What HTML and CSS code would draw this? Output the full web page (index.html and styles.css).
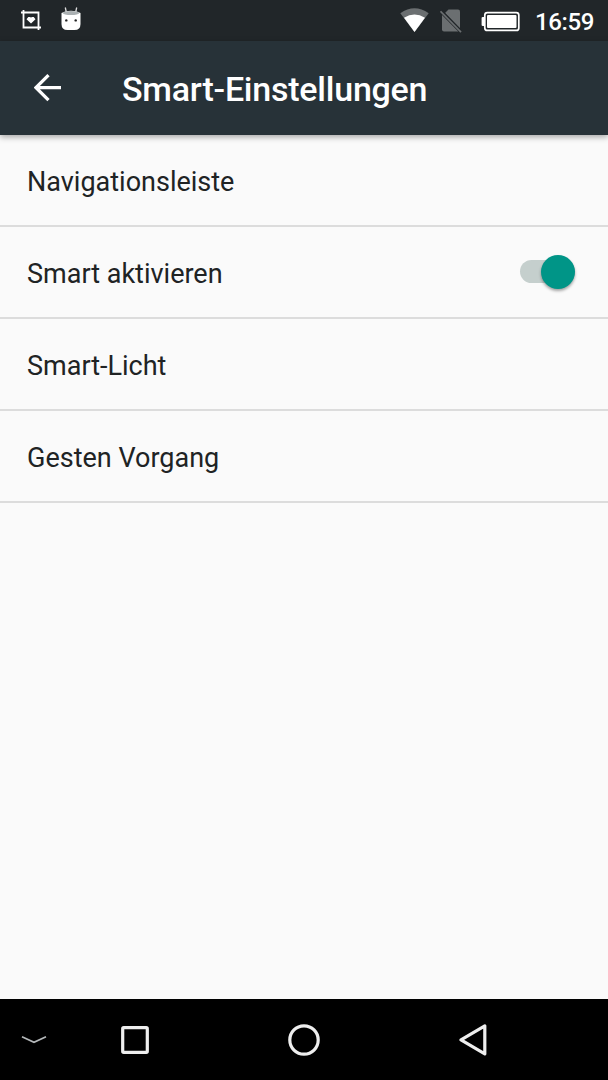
FILE: index.html
```
<!DOCTYPE html>
<html lang="de">
<head>
    <meta charset="UTF-8">
    <meta name="viewport" content="width=device-width, initial-scale=1.0">
    <title>Smart-Einstellungen</title>
    <link rel="stylesheet" href="styles.css">
</head>
<body>
    <div class="screen">
        <div class="status-bar">
            <div class="notifications">
                <svg width="20" height="40" viewBox="0 0 20 40">
                    <path d="M0 12.5H17.5V30M2.5 10V27.5H20" fill="none" stroke="#fff" stroke-width="1.8"/>
                    <path d="M5.5 19.2L7.3 17H8.8L10 17.6L11.2 17H12.7L14.5 19.2L10 23.6Z" fill="#fff"/>
                </svg>
                <svg width="20" height="40" viewBox="0 0 20 40">
                    <path d="M5.5 13L4.3 7.5M14.5 13L15.7 7.5" stroke="#ddd" stroke-width="1.3"/>
                    <path d="M0.5 13Q10 8.5 19.5 13V24Q19.5 30 13.5 30H6.5Q0.5 30 0.5 24Z" fill="#fff"/>
                    <ellipse cx="10" cy="13" rx="8.3" ry="2" fill="#aab0b2"/>
                    <circle cx="5.3" cy="20.4" r="1.2" fill="#222"/>
                    <circle cx="14.7" cy="20.4" r="1.2" fill="#222"/>
                </svg>
            </div>
            <div class="system">
                <svg class="wifi" width="30" height="40" viewBox="0 0 30 40">
                    <path d="M0.3 13.3Q14.5 3.2 28.7 13.3L14.5 32Z" fill="#6b6f71"/>
                    <path d="M4 17.8Q14.5 11.2 25 17.8L14.5 32Z" fill="#fff"/>
                </svg>
                <svg class="sim" width="22" height="40" viewBox="0 0 22 40">
                    <path d="M8.5 9.5H18Q20 9.5 20 11.5V28.5L5 13Z" fill="#6b6f71"/>
                    <path d="M2 15L18.3 31.5H4Q2 31.5 2 29.5Z" fill="#6b6f71"/>
                    <path d="M1.4 10.4L21.9 31.3" stroke="#212629" stroke-width="1.5"/>
                    <path d="M0.5 11.3L21 32.2" stroke="#6b6f71" stroke-width="1.7"/>
                </svg>
                <svg class="battery" width="39" height="40" viewBox="0 0 39 40">
                    <rect x="3.8" y="12.6" width="34" height="17.8" rx="2.5" fill="none" stroke="#fff" stroke-width="1.7"/>
                    <path d="M3.5 17H1.8Q0.6 17 0.6 18V25Q0.6 26 1.8 26H3.5Z" fill="#fff"/>
                    <rect x="6" y="15" width="29.5" height="13" rx="1" fill="#fff"/>
                </svg>
                <span class="clock">16:59</span>
            </div>
        </div>

        <div class="app-bar">
            <svg width="28" height="28" viewBox="0 0 28 28">
                <path d="M27 13.7H2M14.5 1.2L2 13.7L14.5 26.2" fill="none" stroke="#fff" stroke-width="3.3"/>
            </svg>
            <h1>Smart-Einstellungen</h1>
        </div>

        <div class="settings">
            <div class="row">Navigationsleiste</div>
            <div class="row">
                Smart aktivieren
                <div class="switch"><div class="thumb"></div></div>
            </div>
            <div class="row">Smart-Licht</div>
            <div class="row">Gesten Vorgang</div>
        </div>

        <div class="nav-bar">
            <svg class="nav-hide" width="26" height="10" viewBox="0 0 26 10">
                <path d="M1 1.8L13 7.3L25 1.8" fill="none" stroke="#b4b8ba" stroke-width="1.7"/>
            </svg>
            <svg class="nav-recent" width="28" height="28" viewBox="0 0 28 28">
                <rect x="1.7" y="1.7" width="24.6" height="24.6" rx="1" fill="none" stroke="#eee" stroke-width="3.2"/>
            </svg>
            <svg class="nav-home" width="32" height="32" viewBox="0 0 32 32">
                <circle cx="16" cy="16" r="14.2" fill="none" stroke="#eee" stroke-width="3.2"/>
            </svg>
            <svg class="nav-back" width="28" height="32" viewBox="0 0 28 32">
                <path d="M25.8 1.9V29.9L2 15.9Z" fill="none" stroke="#eee" stroke-width="3.2" stroke-linejoin="round"/>
            </svg>
        </div>
    </div>
</body>
</html>
```
FILE: styles.css
```
body {
    margin: 0;
    font-family: Roboto, "Noto Sans", sans-serif;
    background-color: #fafafa;
    color: #202324;
}

svg {
    display: block;
    flex-shrink: 0;
}

.screen {
    display: flex;
    flex-direction: column;
    width: 608px;
    height: 1080px;
}

.status-bar {
    display: flex;
    justify-content: space-between;
    height: 41px;
    padding: 0 14px 0 21px;
    background-color: #212629;
}

.notifications {
    display: flex;
    gap: 20px;
}

.system {
    display: flex;
    color: #fff;
}

.sim {
    margin-left: 10px;
}

.battery {
    margin-left: 19px;
}

.clock {
    margin-left: 15px;
    font-size: 24px;
    font-weight: 500;
    letter-spacing: -0.4px;
    line-height: 44px;
}

.app-bar {
    display: flex;
    align-items: center;
    height: 94px;
    padding-left: 34px;
    background-color: #273238;
    color: #fff;
    box-shadow: 0 2px 6px rgba(0, 0, 0, 0.35);
    z-index: 1;
}

.app-bar h1 {
    margin: 1px 0 0 60px;
    font-size: 34px;
    font-weight: 500;
    letter-spacing: -0.23px;
    line-height: 40px;
}

.settings {
    flex: 1;
}

.row {
    display: flex;
    align-items: center;
    justify-content: space-between;
    box-sizing: border-box;
    height: 92px;
    padding: 4px 33px 0 27px;
    border-bottom: 2px solid #dcdcdc;
    font-size: 27px;
}

/* Switch */
.switch {
    display: flex;
    align-items: center;
    justify-content: flex-end;
    width: 55px;
    height: 23px;
    margin-bottom: 5px;
    border-radius: 12px;
    background-color: #c5cfcd;
}

.thumb {
    flex-shrink: 0;
    width: 34px;
    height: 34px;
    border-radius: 50%;
    background-color: #009587;
    box-shadow: 0 2px 3px rgba(0, 0, 0, 0.35);
}

.nav-bar {
    display: flex;
    align-items: center;
    height: 81px;
    padding-left: 21px;
    background-color: #000;
}

.nav-recent {
    margin-left: 74px;
}

.nav-home {
    margin-left: 139px;
}

.nav-back {
    margin-left: 139px;
}
```
